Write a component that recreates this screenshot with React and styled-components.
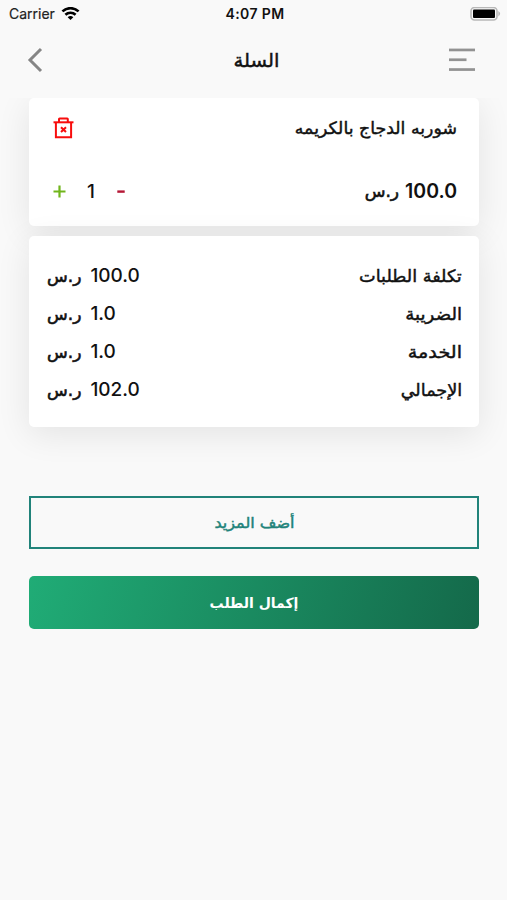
import React from 'react';
import styled, { createGlobalStyle } from 'styled-components';

const GlobalStyle = createGlobalStyle`
  * {
    box-sizing: border-box;
  }

  body {
    margin: 0;
    background: #f9f9f9;
  }
`;

const Screen = styled.div`
  width: 507px;
  height: 900px;
  overflow: hidden;
  background: #f9f9f9;
  color: #111;
  font-family: Inter, 'DejaVu Sans', sans-serif;
`;

const StatusBar = styled.div`
  display: grid;
  grid-template-columns: 1fr auto 1fr;
  align-items: center;
  height: 28px;
  padding: 0 6px 0 9px;
  font-size: 14px;
  line-height: 28px;
`;

const Carrier = styled.div`
  display: flex;
  align-items: center;
  gap: 6px;
  color: #222;
  -webkit-text-stroke: 0.2px currentColor;
`;

const Clock = styled.div`
  font-weight: 600;
  font-size: 14px;
  letter-spacing: 0.4px;
`;

const Battery = styled.svg`
  justify-self: end;
`;

const Header = styled.header`
  display: grid;
  grid-template-columns: 37px 1fr 27px;
  align-items: center;
  height: 70px;
  padding: 0 31px 7px 27px;
  text-align: center;
`;

const Arabic = styled.span`
  display: block;
  font-family: 'DejaVu Sans', sans-serif;
  font-size: ${(props) => props.size || 17}px;
  font-weight: ${(props) => (props.bold ? 700 : 400)};
  line-height: 24px;
  white-space: nowrap;
  -webkit-text-stroke: ${(props) => (props.bold ? 0 : props.weight || 0.45)}px currentColor;
  transform: scaleX(${(props) => props.stretch || 1});
  transform-origin: ${(props) => props.origin || 'center'};
`;

const Content = styled.main`
  height: 802px;
  padding: 0 28px 0 29px;
  overflow: hidden;
`;

const Card = styled.section`
  background: #fff;
  border-radius: 5px;
  box-shadow: 0 7px 34px rgba(0, 0, 0, 0.09);
`;

const ItemCard = styled(Card)`
  display: flex;
  flex-direction: column;
  justify-content: space-between;
  height: 128px;
  margin-bottom: 10px;
  padding: 18px 22px 23px 24px;
`;

const SummaryCard = styled(Card)`
  position: relative;
  height: 191px;
  padding: 21px 17px 0 18px;
`;

const Row = styled.div`
  display: flex;
  flex-direction: row-reverse;
  align-items: center;
  justify-content: space-between;
  height: ${(props) => props.height || 24}px;
`;

const Amount = styled.div`
  display: flex;
  align-items: center;
  gap: ${(props) => props.gap}px;
  font-size: ${(props) => (props.strong ? 19.5 : 19)}px;
  font-weight: ${(props) => (props.strong ? 600 : 500)};
  line-height: 24px;
`;

const Stepper = styled.div`
  display: flex;
  align-items: center;
  gap: 21px;
  font-size: 19px;
  font-weight: 500;

  svg:last-child {
    margin-left: 1px;
  }
`;

const Buttons = styled.div`
  display: flex;
  flex-direction: column;
  gap: 27px;
  margin-top: 69px;
`;

const Button = styled.button`
  display: flex;
  align-items: center;
  justify-content: center;
  height: 53px;
  padding: 0;
  border: 0;
  border-radius: 5px;
  background: linear-gradient(105deg, #20ac76, #14694a);
  color: #fff;
`;

const OutlineButton = styled(Button)`
  border: 2px solid #21837a;
  border-radius: 0;
  background: transparent;
  color: #21837a;
`;

const WifiIcon = () => (
  <svg width="19" height="15" viewBox="0 0 19 15" fill="none" stroke="#000" strokeWidth="2.6">
    <path d="M1.4 4.4C6 0.1 13 0.1 17.6 4.4" />
    <path d="M4.4 7.7C7.3 5 11.7 5 14.6 7.7" />
    <path d="M6.7 10.2C8.2 8.7 10.8 8.7 12.3 10.2L9.5 13Z" fill="#000" stroke="none" />
  </svg>
);

const BackIcon = () => (
  <svg width="17" height="26" viewBox="0 0 17 26" fill="none" stroke="#858585" strokeWidth="3">
    <path d="M14 2L3 13L14 24" />
  </svg>
);

const MenuIcon = () => (
  <svg width="27" height="26" viewBox="0 0 27 26" fill="#929292">
    <rect x="0" y="1.6" width="26" height="2.7" />
    <rect x="0" y="11.4" width="17.5" height="2.7" />
    <rect x="0" y="21.2" width="26" height="2.7" />
  </svg>
);

const TrashIcon = () => (
  <svg width="21" height="22" viewBox="0 0 21 22" fill="none" stroke="#f80d0d" strokeWidth="2">
    <path d="M0.5 5.3H20.5" />
    <path d="M6 5V2.1Q6 1.5 6.6 1.5H14.2Q14.8 1.5 14.8 2.1V5" />
    <path d="M2.9 5.3V20.2H18.1V5.3" />
    <path d="M8 10.2L13 15M13 10.2L8 15" strokeWidth="2" />
  </svg>
);

const PlusIcon = () => (
  <svg width="13" height="13" viewBox="0 0 13 13" stroke="#70b51b" strokeWidth="2.2">
    <path d="M0.5 6.5H12.5M6.5 0.5V12.5" />
  </svg>
);

const MinusIcon = () => (
  <svg width="8" height="4" viewBox="0 0 8 4" fill="#b51735">
    <rect x="0.3" y="1.4" width="7.4" height="2.4" />
  </svg>
);

const summary = [
  { label: 'تكلفة الطلبات', value: '100.0', stretch: 1.04 },
  { label: 'الضريبة', value: '1.0', stretch: 1.07 },
  { label: 'الخدمة', value: '1.0', stretch: 1.13 },
  { label: 'الإجمالي', value: '102.0', stretch: 1.04 },
];

const Currency = () => (
  <Arabic dir="rtl" weight={0.6}>
    ر.س
  </Arabic>
);

const App = () => (
  <Screen>
    <GlobalStyle />
    <StatusBar>
      <Carrier>
        Carrier
        <WifiIcon />
      </Carrier>
      <Clock>4:07 PM</Clock>
      <Battery width="31" height="15" viewBox="0 0 31 15">
        <rect x="1" y="0.5" width="26" height="12.5" rx="3.5" fill="#f9f9f9" stroke="#b8b8b8" strokeWidth="1.6" />
        <rect x="3" y="2.5" width="22" height="8.5" rx="1" fill="#000" />
        <path d="M28.3 4.1Q32 6.7 28.3 9.4Z" fill="#b8b8b8" />
      </Battery>
    </StatusBar>

    <Header>
      <BackIcon />
      <Arabic dir="rtl" size={19} stretch={1.03}>
        السلة
      </Arabic>
      <MenuIcon />
    </Header>

    <Content>
      <ItemCard>
        <Row>
          <Arabic dir="rtl" origin="right" stretch={1.02}>
            شوربه الدجاج بالكريمه
          </Arabic>
          <TrashIcon />
        </Row>
        <Row>
          <Amount gap={6} strong>
            <Currency />
            <span>100.0</span>
          </Amount>
          <Stepper>
            <PlusIcon />
            <span>1</span>
            <MinusIcon />
          </Stepper>
        </Row>
      </ItemCard>

      <SummaryCard>
        {summary.map((line) => (
          <Row key={line.label} height={37.9}>
            <Arabic dir="rtl" origin="right" stretch={line.stretch}>
              {line.label}
            </Arabic>
            <Amount gap={9}>
              <Currency />
              <span>{line.value}</span>
            </Amount>
          </Row>
        ))}
      </SummaryCard>

      <Buttons>
        <OutlineButton>
          <Arabic dir="rtl" size={15} stretch={1.07}>
            أضف المزيد
          </Arabic>
        </OutlineButton>
        <Button>
          <Arabic dir="rtl" size={14} bold>
            إكمال الطلب
          </Arabic>
        </Button>
      </Buttons>
    </Content>
  </Screen>
);

export default App;
